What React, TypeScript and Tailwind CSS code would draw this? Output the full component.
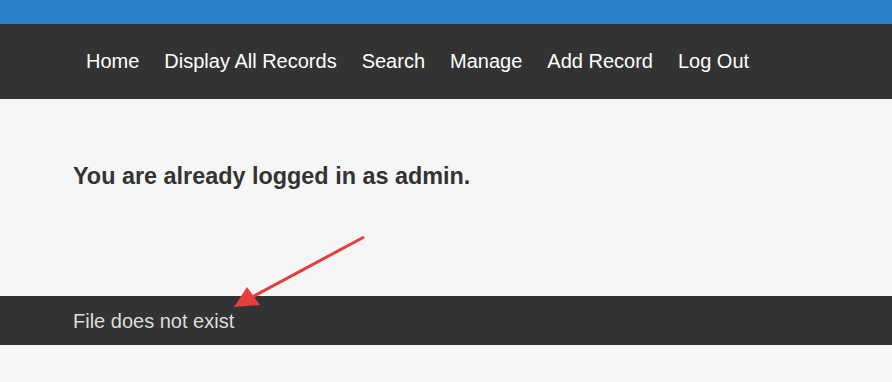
import React from 'react'

const navItems = ['Home', 'Display All Records', 'Search', 'Manage', 'Add Record', 'Log Out']

export default function App() {
  return (
    <div className="relative min-h-[382px] bg-[#f6f6f6] font-['Liberation_Sans',Arial,sans-serif]">
      {/* top accent */}
      <div className="h-[24px] bg-[#2c80c8]" />

      {/* nav */}
      <nav className="flex h-[75px] items-center gap-[25px] bg-[#333333] pb-[2px] pl-[86px] text-[20px] text-white">
        {navItems.map((item) => (
          <a key={item} href="#" className="leading-none">
            {item}
          </a>
        ))}
      </nav>

      {/* main */}
      <main className="flex h-[197px] items-start pl-[73px] pt-[62px]">
        <h2 className="text-[23.4px] font-bold leading-[30px] text-[#333333]">
          You are already logged in as admin.
        </h2>
      </main>

      {/* footer */}
      <footer className="flex h-[49px] items-center bg-[#333333] pl-[73px] text-[20px] text-[#dddddd]">
        File does not exist
      </footer>

      {/* annotation arrow */}
      <svg
        className="pointer-events-none absolute left-0 top-0"
        width="892"
        height="382"
        viewBox="0 0 892 382"
      >
        <line x1="364" y1="237" x2="252" y2="297" stroke="#e53e3e" strokeWidth="3" />
        <polygon points="234,307 247,287 260,305" fill="#e53e3e" />
      </svg>
    </div>
  )
}
